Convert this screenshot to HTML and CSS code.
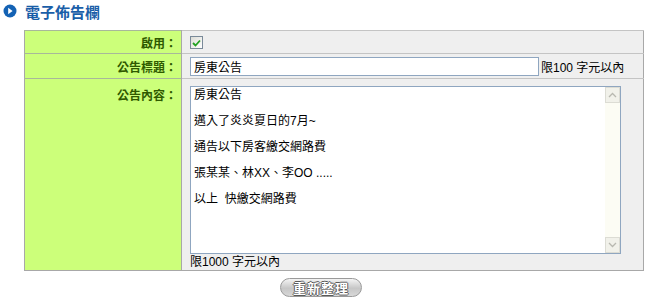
FILE: index.html
```html
<!DOCTYPE html>
<html lang="zh-Hant">
<head>
  <meta charset="UTF-8" />
  <title>電子佈告欄</title>
  <link rel="stylesheet" href="styles.css">
</head>
<body>
  <h2 class="title">
    <svg class="title-icon" width="14" height="14" viewBox="0 0 14 14">
      <circle cx="7" cy="7" r="6.5" fill="#1462b4"/>
      <path d="M5.2 3.8 L9.6 7 L5.2 10.2 Z" fill="#fff"/>
    </svg>
    電子佈告欄
  </h2>

  <table class="form">
    <tr class="row-enable">
      <th>啟用：</th>
      <td>
        <label class="check">
          <input type="checkbox" checked>
          <span class="check-box">
            <svg width="9" height="8" viewBox="0 0 9 8"><path d="M1 4 L3.5 6.5 L8 1.5" fill="none" stroke="#21a121" stroke-width="1.8"/></svg>
          </span>
        </label>
      </td>
    </tr>
    <tr class="row-title">
      <th>公告標題：</th>
      <td>
        <input type="text" class="text-input" value="房東公告"><span class="hint">限100 字元以內</span>
      </td>
    </tr>
    <tr class="row-content">
      <th>公告內容：</th>
      <td>
        <div class="area">
          <textarea class="area-text">房東公告

邁入了炎炎夏日的7月~

通告以下房客繳交網路費

張某某、林XX、李OO .....

以上  快繳交網路費</textarea>
          <div class="scrollbar">
            <div class="sb-btn">
              <svg width="9" height="6" viewBox="0 0 9 6"><path d="M1 5 L4.5 1.5 L8 5" fill="none" stroke="#b8b8b0" stroke-width="1.3"/></svg>
            </div>
            <div class="sb-track"></div>
            <div class="sb-btn">
              <svg width="9" height="6" viewBox="0 0 9 6"><path d="M1 1 L4.5 4.5 L8 1" fill="none" stroke="#b8b8b0" stroke-width="1.3"/></svg>
            </div>
          </div>
        </div>
        <div class="hint-below">限1000 字元以內</div>
      </td>
    </tr>
  </table>

  <div class="actions">
    <button class="reset-btn">重新整理</button>
  </div>
</body>
</html>
```

FILE: styles.css
```css
* {
  box-sizing: border-box;
}
body {
  margin: 0;
  font-family: "Liberation Sans", "Noto Sans CJK TC", sans-serif;
  font-size: 12px;
  color: #000;
  background: #fff;
}
.title {
  display: flex;
  align-items: center;
  gap: 8px;
  margin: 0;
  padding: 2px 0 0 3px;
  height: 20px;
  font-size: 15px;
  font-weight: bold;
  color: #1a5ea8;
}
.form {
  border-collapse: collapse;
  margin: 10px 0 0 24px;
  width: 620px;
  border: 1px solid #a8a8a8;
}
.form th {
  width: 157px;
  background: #ccff7a;
  color: #2f5a00;
  font-weight: bold;
  text-align: right;
  padding: 0 4px 0 0;
  border-top: 1px solid #a8b89a;
  border-right: 1px solid #a8a8a8;
  white-space: nowrap;
}
.form td {
  background: #efefef;
  border-top: 1px solid #c4c4c4;
  padding: 0 0 0 8px;
}
.row-enable th, .row-enable td {
  height: 23px;
}
.row-title th, .row-title td {
  height: 25px;
}
.row-content th {
  vertical-align: top;
  padding-top: 7px;
}
.row-content td {
  padding-top: 7px;
}
.check {
  display: inline-flex;
  vertical-align: middle;
  cursor: pointer;
}
.check input {
  display: none;
}
.check-box {
  width: 13px;
  height: 13px;
  border: 1px solid #7a8a99;
  background: linear-gradient(135deg, #dcdcd6, #fff);
  display: flex;
  align-items: center;
  justify-content: center;
}
.text-input {
  width: 349px;
  height: 19px;
  border: 1px solid #8fa6c0;
  padding: 1px 3px;
  font: inherit;
  vertical-align: middle;
}
.hint {
  margin-left: 2px;
  vertical-align: middle;
}
.area {
  display: flex;
  width: 431px;
  height: 168px;
  border: 1px solid #8fa6c0;
  background: #fff;
}
.area-text {
  flex: 1;
  border: none;
  resize: none;
  outline: none;
  overflow: hidden;
  padding: 2px 3px;
  font: inherit;
  line-height: 13px;
}
.scrollbar {
  display: flex;
  flex-direction: column;
  width: 15px;
  background: #fcfcf4;
}
.sb-btn {
  height: 16px;
  display: flex;
  align-items: center;
  justify-content: center;
  background: #f1f1ea;
  border: 1px solid #dcdcd4;
}
.sb-track {
  flex: 1;
}
.hint-below {
  height: 15px;
  line-height: 15px;
  margin-top: 1px;
}
.actions {
  padding: 7px 0 0 280px;
}
.reset-btn {
  width: 82px;
  height: 19px;
  border: 1px solid #9a9a9a;
  border-radius: 10px;
  background: linear-gradient(#f4f4f4, #c6c6c6 55%, #d8d8d8);
  color: #fff;
  font-family: "Noto Sans CJK TC", sans-serif;
  font-size: 13px;
  font-weight: bold;
  letter-spacing: 1px;
  line-height: 15px;
  padding: 0;
  text-shadow: -1px 0 #5a5a5a, 1px 0 #5a5a5a, 0 -1px #5a5a5a, 0 1px #5a5a5a;
  cursor: pointer;
}
```
